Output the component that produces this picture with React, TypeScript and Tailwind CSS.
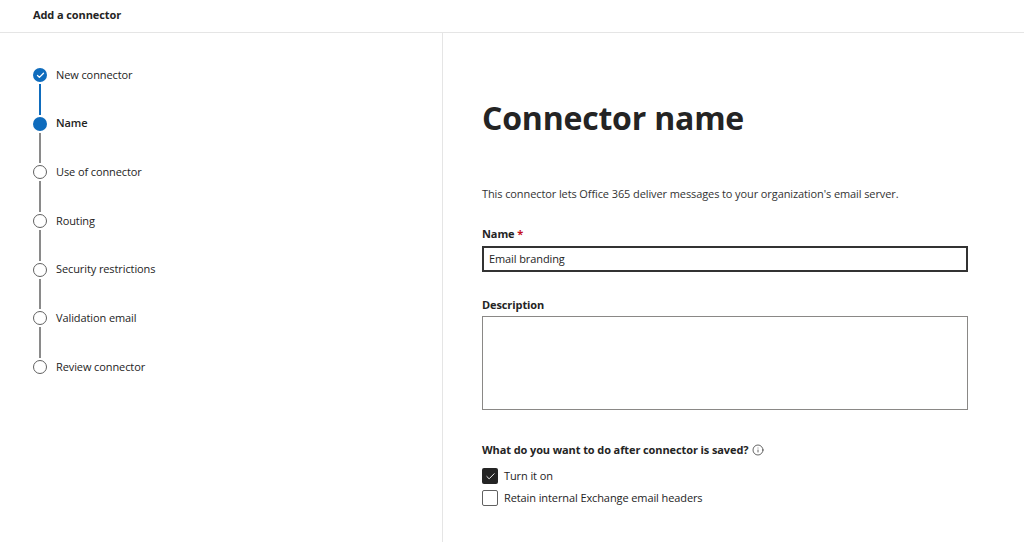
import { Check, Info } from "lucide-react";

const steps = [
  { label: "New connector", state: "done" },
  { label: "Name", state: "current" },
  { label: "Use of connector", state: "todo" },
  { label: "Routing", state: "todo" },
  { label: "Security restrictions", state: "todo" },
  { label: "Validation email", state: "todo" },
  { label: "Review connector", state: "todo" },
];

function StepDot({ state }: { state: string }) {
  if (state === "done") {
    return (
      <div className="w-[14px] h-[14px] rounded-full bg-[#0f6cbd] flex items-center justify-center">
        <Check size={9} strokeWidth={3.5} className="text-white" />
      </div>
    );
  }
  if (state === "current") {
    return <div className="w-[14px] h-[14px] rounded-full bg-[#0f6cbd]" />;
  }
  return <div className="w-[14px] h-[14px] rounded-full border-[1.5px] border-[#616161] bg-white" />;
}

function Stepper() {
  return (
    <div className="flex flex-col">
      {steps.map((s, i) => (
        <div key={s.label} className="flex flex-col">
          <div className="flex items-center h-[14px]">
            <StepDot state={s.state} />
            <span
              className={
                "ml-[9px] text-[11px] tracking-[-0.1px] leading-none text-[#242424] -translate-y-[1px] " +
                (s.state === "current" ? "font-semibold" : "")
              }
            >
              {s.label}
            </span>
          </div>
          {i < steps.length - 1 && (
            <div className="h-[34.7px] w-[14px] flex justify-center py-[2px]">
              <div
                className={
                  "w-[2px] h-full " + (s.state === "done" ? "bg-[#0f6cbd]" : "bg-[#8a8a8a]")
                }
              />
            </div>
          )}
        </div>
      ))}
    </div>
  );
}

export default function App() {
  return (
    <div
      className="w-[1024px] h-[542px] bg-white flex flex-col overflow-hidden text-[#242424] tracking-[-0.1px]"
      style={{ fontFamily: '"Open Sans", "Noto Sans", sans-serif' }}
    >
      <header className="h-[33px] shrink-0 border-b border-[#e5e5e5] flex items-center pl-[33px] pb-[2px]">
        <h1 className="text-[11px] font-bold">Add a connector</h1>
      </header>
      <div className="flex flex-1 min-h-0">
        <aside className="w-[443px] shrink-0 border-r border-[#e5e5e5] pl-[33px] pt-[35px]">
          <Stepper />
        </aside>
        <main className="flex-1 pl-[39px] pr-[56px] text-[11px]">
          <h2 className="mt-[64px] text-[32px] leading-[42px] font-bold tracking-[-0.2px] text-[#242424]">
            Connector name
          </h2>
          <p className="mt-[47px] leading-[16px] text-[#333]">
            This connector lets Office 365 deliver messages to your organization's email server.
          </p>
          <label className="block mt-[24px] leading-[16px] font-bold">
            Name <span className="text-[#c50f1f]">*</span>
          </label>
          <div className="mt-[4px] h-[26px] border-2 border-[#333] flex items-center px-[5px]">
            Email branding
          </div>
          <label className="block mt-[25px] leading-[16px] font-bold">Description</label>
          <div className="mt-[3px] h-[94px] border border-[#8a8886]" />
          <div className="mt-[32px] flex items-center leading-[16px] font-bold">
            What do you want to do after connector is saved?
            <Info size={12} strokeWidth={1.5} className="ml-[4px] text-[#333]" />
          </div>
          <div className="mt-[10px] flex items-center h-[16px]">
            <div className="w-[16px] h-[16px] rounded-[2px] bg-[#242424] flex items-center justify-center">
              <Check size={11} strokeWidth={2} className="text-white" />
            </div>
            <span className="ml-[6px]">Turn it on</span>
          </div>
          <div className="mt-[6px] flex items-center h-[16px]">
            <div className="w-[16px] h-[16px] rounded-[2px] border border-[#616161] bg-white" />
            <span className="ml-[6px]">Retain internal Exchange email headers</span>
          </div>
        </main>
      </div>
    </div>
  );
}
